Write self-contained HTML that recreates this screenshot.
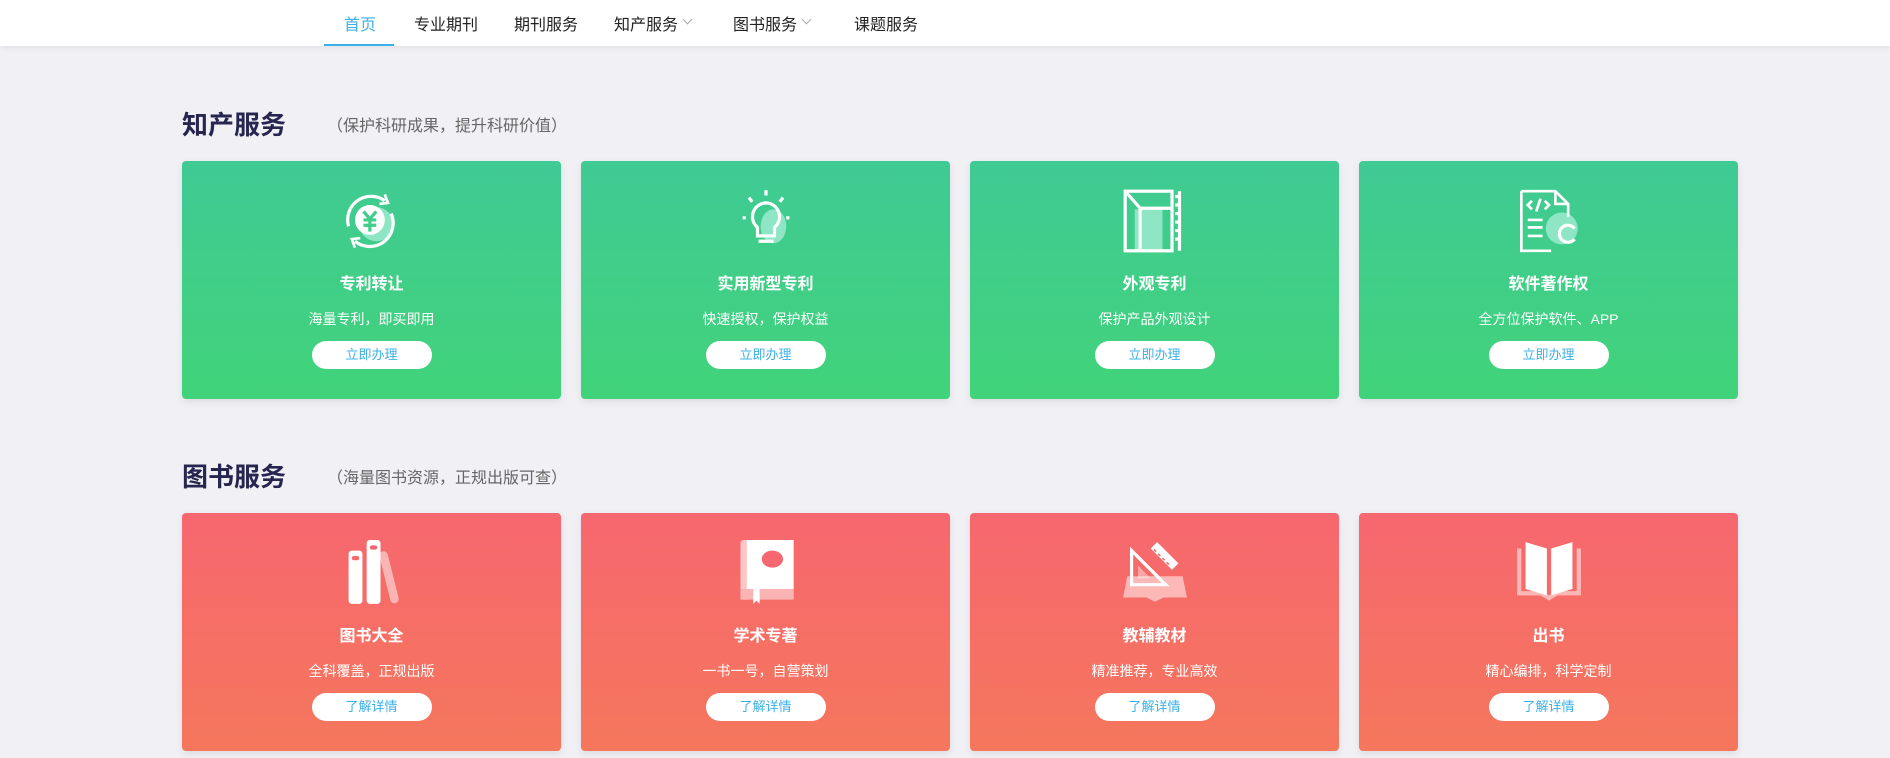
<!DOCTYPE html>
<html><head><meta charset="utf-8">
<style>
*{margin:0;padding:0;box-sizing:border-box}
body{width:1890px;height:758px;overflow:hidden;background:#f0f0f5;font-family:"Liberation Sans","Noto Sans CJK SC",sans-serif;position:relative}
.nav{position:absolute;left:0;top:0;width:1890px;height:46px;background:#fff;box-shadow:0 2px 6px rgba(0,0,0,.06)}
.nav span{position:absolute;top:11px;font-size:16px;color:#222;white-space:nowrap}
.nav .act{color:#3bb0e8}
.ul{position:absolute;left:324px;top:44px;width:70px;height:2px;background:#3bb0e8}
.chev{position:absolute;top:16px;width:7px;height:7px;border-right:1px solid #aaa;border-bottom:1px solid #aaa;transform:rotate(45deg)}
.h{position:absolute;left:182px;font-size:26px;font-weight:bold;color:#262650}
.sub{position:absolute;left:327px;font-size:16px;color:#666}
.card{position:absolute;border-radius:4px;text-align:center;color:#fff;box-shadow:0 3px 8px rgba(0,0,0,.08)}
.g{background:linear-gradient(#40ca94,#41d37a)}
.r{background:linear-gradient(#f6676f,#f5775c)}
.card svg{position:absolute;left:50%;margin-left:-35px;top:27px;width:70px;height:66px}
.card .t{position:absolute;left:0;right:0;top:109px;font-size:16px;font-weight:bold}
.card .d{position:absolute;left:0;right:0;top:148px;font-size:14px}
.card .b{position:absolute;left:50%;margin-left:-60px;top:180px;width:120px;height:28px;border-radius:14px;background:#fff;color:#3bb0e8;font-size:13px;line-height:28px}
</style></head><body>
<div class="nav">
<span class="act" style="left:344px">首页</span>
<span style="left:414px">专业期刊</span>
<span style="left:514px">期刊服务</span>
<span style="left:614px">知产服务</span><i class="chev" style="left:684px"></i>
<span style="left:733px">图书服务</span><i class="chev" style="left:803px"></i>
<span style="left:854px">课题服务</span>
<div class="ul"></div>
</div>

<div class="h" style="top:105px">知产服务</div>
<div class="sub" style="top:112px">（保护科研成果，提升科研价值）</div>

<div class="card g" style="left:182px;top:161px;width:379px;height:238px">
<svg viewBox="0 0 64 62"><circle cx="36" cy="34" r="16" fill="#8ee6c4"/><circle cx="30" cy="30" r="14" fill="#fff"/><path d="M24 22l6 7 6-7M30 29v12M24 30h12M24 35h12" stroke="#41cd8a" stroke-width="3" fill="none"/><path d="M10 36A22 22 0 0 1 44 12M50 24A22 22 0 0 1 16 50" stroke="#fff" stroke-width="3" fill="none"/><path d="M44 6l3 8-8 1M16 56l-3-8 8-1" stroke="#fff" stroke-width="2.5" fill="none"/></svg>
<div class="t">专利转让</div><div class="d">海量专利，即买即用</div><div class="b">立即办理</div></div>

<div class="card g" style="left:581px;top:161px;width:369px;height:238px">
<svg viewBox="0 0 64 62"><ellipse cx="39" cy="36" rx="12" ry="16" fill="#8ee6c4"/><path d="M32 14a13 13 0 0 0-8 23v8h16v-8a13 13 0 0 0-8-23z" stroke="#fff" stroke-width="3" fill="none"/><path d="M25 50h14M32 2v5M16 9l3 4M48 9l-3 4M10 28h3M51 28h3" stroke="#fff" stroke-width="3"/></svg>
<div class="t">实用新型专利</div><div class="d">快速授权，保护权益</div><div class="b">立即办理</div></div>

<div class="card g" style="left:970px;top:161px;width:369px;height:238px">
<svg viewBox="0 0 64 62"><rect x="13" y="20" width="26" height="38" fill="#8ee6c4"/><rect x="4" y="3" width="44" height="56" stroke="#fff" stroke-width="3" fill="none"/><path d="M4 3l14 16v40M18 19h30" stroke="#fff" stroke-width="3" fill="none"/><path d="M55 3v56M51 8h4M51 16h4M51 24h4M51 32h4M51 40h4M51 48h4" stroke="#fff" stroke-width="3"/></svg>
<div class="t">外观专利</div><div class="d">保护产品外观设计</div><div class="b">立即办理</div></div>

<div class="card g" style="left:1359px;top:161px;width:379px;height:238px">
<svg viewBox="0 0 64 62"><circle cx="44" cy="38" r="15" fill="#8ee6c4"/><path d="M6 3h32l12 12v12M6 3v56h28" stroke="#fff" stroke-width="2.5" fill="none"/><path d="M38 3v12h12" stroke="#fff" stroke-width="2.5" fill="none"/><path d="M16 12l-4 4 4 4M28 12l4 4-4 4M24 10l-4 12M12 30h14M12 37h14M12 45h14" stroke="#fff" stroke-width="2.5" fill="none"/><path d="M56 48a8 8 0 1 1 0-10" stroke="#fff" stroke-width="3" fill="none"/></svg>
<div class="t">软件著作权</div><div class="d">全方位保护软件、APP</div><div class="b">立即办理</div></div>

<div class="h" style="top:457px">图书服务</div>
<div class="sub" style="top:464px">（海量图书资源，正规出版可查）</div>

<div class="card r" style="left:182px;top:513px;width:379px;height:238px">
<svg viewBox="0 0 64 62"><rect x="44" y="10" width="8" height="50" rx="4" fill="#fab4b4" transform="rotate(-14 48 35)"/><rect x="10" y="10" width="13" height="50" rx="3" fill="#fff"/><rect x="27" y="0" width="13" height="60" rx="3" fill="#fff"/><rect x="13" y="15" width="7" height="4" rx="2" fill="#f6676f"/><rect x="30" y="5" width="7" height="4" rx="2" fill="#f6676f"/></svg>
<div class="t">图书大全</div><div class="d">全科覆盖，正规出版</div><div class="b">了解详情</div></div>

<div class="card r" style="left:581px;top:513px;width:369px;height:238px">
<svg viewBox="0 0 64 62"><rect x="8" y="0" width="10" height="56" rx="3" fill="#fcc6c6"/><rect x="8" y="46" width="50" height="10" fill="#fab4b4"/><rect x="14" y="0" width="44" height="46" fill="#fff"/><ellipse cx="38" cy="18" rx="10" ry="8" fill="#f6676f"/><path d="M20 46v14l3-3 3 3V46z" fill="#fff"/></svg>
<div class="t">学术专著</div><div class="d">一书一号，自营策划</div><div class="b">了解详情</div></div>

<div class="card r" style="left:970px;top:513px;width:369px;height:238px">
<svg viewBox="0 0 64 62"><path d="M6 34h52l4 20H40l-8 4-8-4H2z" fill="#fbb8b6"/><path d="M10 10v32h32z" stroke="#fff" stroke-width="3" fill="none"/><path d="M16 24v12h12z" fill="#fff" opacity=".4"/><path d="M28 8l6-6 20 20-6 6z" fill="#fff"/><path d="M31 9l2 2M35 13l2 2M39 17l2 2M43 21l2 2" stroke="#f6676f" stroke-width="1.5"/></svg>
<div class="t">教辅教材</div><div class="d">精准推荐，专业高效</div><div class="b">了解详情</div></div>

<div class="card r" style="left:1359px;top:513px;width:379px;height:238px">
<svg viewBox="0 0 64 62"><path d="M2 8v44h22l8 5 8-5h22V8h-4v40H40l-8 4-8-4H6V8z" fill="#fbb8b6"/><path d="M10 2l20 6v44L10 46zM54 2L34 8v44l20-6z" fill="#fff"/></svg>
<div class="t">出书</div><div class="d">精心编排，科学定制</div><div class="b">了解详情</div></div>
</body></html>
